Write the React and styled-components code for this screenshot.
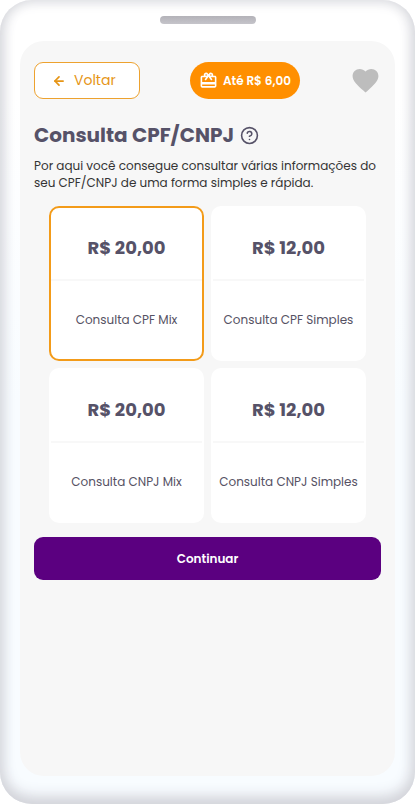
import React, { useState } from "react";
import styled, { createGlobalStyle } from "styled-components";
import { ArrowLeft, CircleHelp } from "lucide-react";
import { MdFavorite, MdCardGiftcard } from "react-icons/md";

const GlobalStyle = createGlobalStyle`
  *, *::before, *::after { box-sizing: border-box; }
  body {
    margin: 0;
    background: #ffffff;
    font-family: Poppins, Inter, "Open Sans", sans-serif;
  }
  button { font-family: inherit; cursor: pointer; }
`;

const Phone = styled.div`
  min-height: 100vh;
  display: flex;
  flex-direction: column;
  padding: 16px 20px 28px;
  border-radius: 32px;
  background: linear-gradient(#ffffff, #ffffff 12%, #f8fcff 50%);
  box-shadow: inset 0 0 14px #d4d5da, inset 0 -6px 16px #d0d1d8;
`;

const Speaker = styled.div`
  width: 96px;
  height: 8px;
  margin: 0 auto 17px;
  border-radius: 4px;
  background: linear-gradient(#b3b2b8, #c5c4ca);
`;

const Screen = styled.main`
  flex: 1;
  display: flex;
  flex-direction: column;
  padding: 21px 14px 20px;
  border-radius: 24px;
  background: #f7f7f7;
`;

const Toolbar = styled.header`
  display: flex;
  align-items: center;
  justify-content: space-between;
`;

const BackButton = styled.button`
  display: flex;
  align-items: center;
  gap: 8px;
  width: 106px;
  height: 37px;
  padding: 0 17px;
  border: 1px solid #eda22f;
  border-radius: 9px;
  background: #ffffff;
  color: #e69516;
  font-size: 14px;
`;

const RewardButton = styled.button`
  display: flex;
  align-items: center;
  justify-content: center;
  gap: 5px;
  width: 110px;
  height: 37px;
  padding: 0;
  border: 0;
  border-radius: 19px;
  background: #ff8f00;
  color: #ffffff;
  font-size: 12px;
  font-weight: 600;
  white-space: nowrap;
`;

const IconButton = styled.button`
  display: flex;
  padding: 0;
  border: 0;
  background: none;
  color: ${({ $color }) => $color};
`;

const Heading = styled.div`
  display: flex;
  align-items: center;
  gap: 6px;
  margin-top: 21px;
`;

const Title = styled.h1`
  margin: 0;
  color: #565268;
  font-size: 20px;
  line-height: 30px;
  font-weight: 700;
`;

const Intro = styled.p`
  margin: 7px 0 0;
  color: #343434;
  font-size: 12px;
  line-height: 17px;
`;

const Options = styled.fieldset`
  display: grid;
  grid-template-columns: 1fr 1fr;
  gap: 7px;
  min-width: 0;
  margin: 15px 15px 0;
  padding: 0;
  border: 0;
`;

const Option = styled.label`
  display: grid;
  grid-template-rows: 73px 1fr;
  height: 155px;
  border: 2px solid transparent;
  border-radius: 10px;
  background: #ffffff;
  text-align: center;
  cursor: pointer;
  &:has(input:checked) { border-color: #f39b19; }
`;

const HiddenRadio = styled.input`
  position: absolute;
  appearance: none;
  width: 1px;
  height: 1px;
  margin: 0;
  opacity: 0;
`;

const Price = styled.strong`
  display: grid;
  place-items: center;
  padding-top: 8px;
  border-bottom: 2px solid #f8f8f8;
  color: #565268;
  font-size: 18px;
  font-weight: 700;
`;

const OptionName = styled.span`
  display: grid;
  place-items: center;
  color: #565264;
  font-size: 12px;
  white-space: nowrap;
`;

const ContinueButton = styled.button`
  height: 43px;
  margin-top: 14px;
  border: 0;
  border-radius: 9px;
  background: #5b0080;
  color: #ffffff;
  font-size: 12px;
  font-weight: 600;
`;

const options = [
  { id: "cpf-mix", price: "R$ 20,00", name: "Consulta CPF Mix" },
  { id: "cpf-simples", price: "R$ 12,00", name: "Consulta CPF Simples" },
  { id: "cnpj-mix", price: "R$ 20,00", name: "Consulta CNPJ Mix" },
  { id: "cnpj-simples", price: "R$ 12,00", name: "Consulta CNPJ Simples" },
];

export default function App() {
  const [selected, setSelected] = useState("cpf-mix");
  return (
    <>
      <GlobalStyle />
      <Phone>
        <Speaker />
        <Screen>
          <Toolbar>
            <BackButton type="button">
              <ArrowLeft size={14} strokeWidth={3} />
              Voltar
            </BackButton>
            <RewardButton type="button">
              <MdCardGiftcard size={19} />
              Até R$ 6,00
            </RewardButton>
            <IconButton type="button" $color="#bdbdbd" aria-label="Favoritar">
              <MdFavorite size={31} />
            </IconButton>
          </Toolbar>
          <Heading>
            <Title>Consulta CPF/CNPJ</Title>
            <IconButton type="button" $color="#565268" aria-label="Ajuda">
              <CircleHelp size={19} strokeWidth={2} />
            </IconButton>
          </Heading>
          <Intro>
            Por aqui você consegue consultar várias informações do seu CPF/CNPJ
            de uma forma simples e rápida.
          </Intro>
          <Options aria-label="Tipo de consulta">
            {options.map(({ id, price, name }) => (
              <Option key={id}>
                <HiddenRadio
                  type="radio"
                  name="consulta"
                  value={id}
                  checked={selected === id}
                  onChange={() => setSelected(id)}
                />
                <Price>{price}</Price>
                <OptionName>{name}</OptionName>
              </Option>
            ))}
          </Options>
          <ContinueButton type="button">Continuar</ContinueButton>
        </Screen>
      </Phone>
    </>
  );
}
